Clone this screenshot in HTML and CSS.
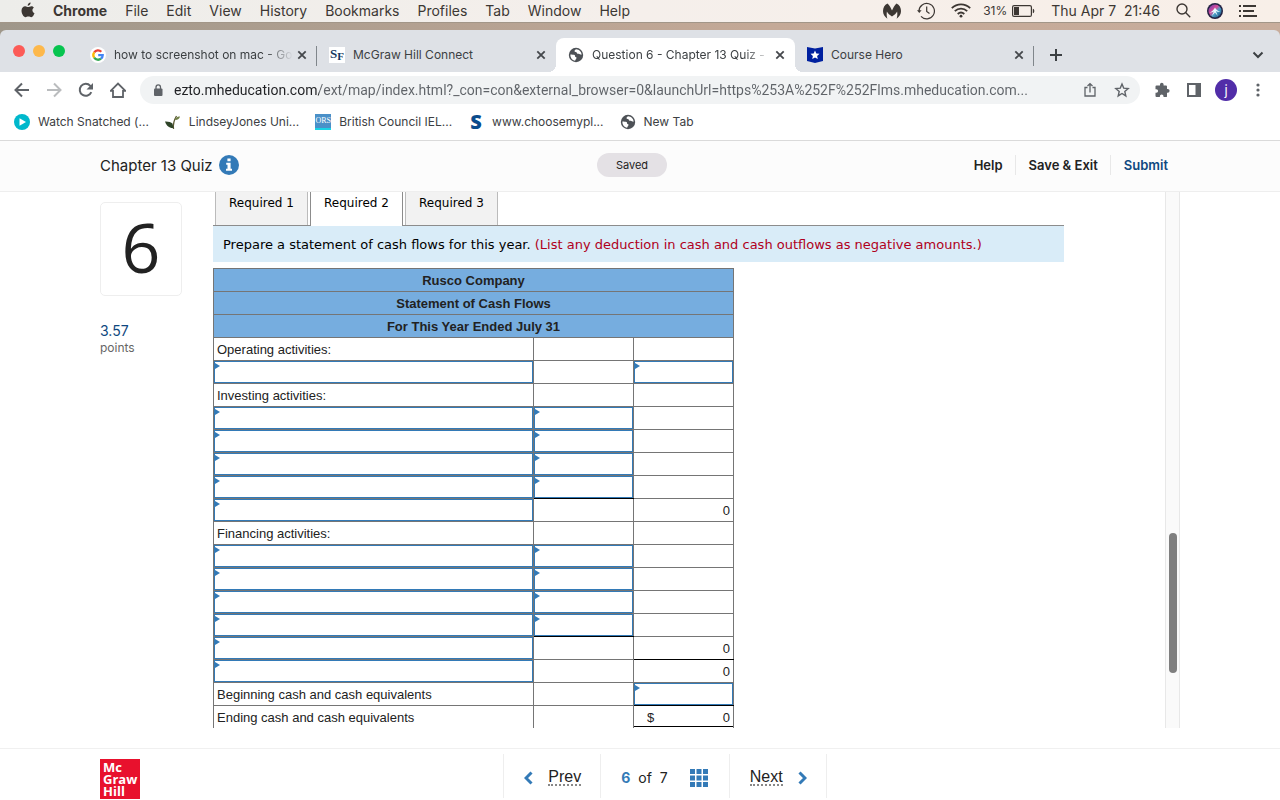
FILE: index.html
```
<!DOCTYPE html>
<html lang="en">
<head>
    <meta charset="UTF-8">
    <meta name="viewport" content="width=device-width, initial-scale=1.0">
    <title>Question 6 - Chapter 13 Quiz - Connect</title>
    <link rel="stylesheet" href="styles.css">
</head>
<body>
    <!-- Shared icon shapes -->
    <svg class="defs" width="0" height="0" aria-hidden="true">
        <symbol id="close" viewBox="0 0 16 16"><path d="M4.300 4.300l7.400 7.400M11.700 4.300l-7.400 7.400" fill="none" stroke="#45484c" stroke-width="1.800"/></symbol>
        <symbol id="globe" viewBox="0 0 16 16">
            <circle cx="8" cy="8" r="7.200" fill="#4d5156"/>
            <path d="M2.400 7.400c1.500 .3 3.200-.1 4.200 .7 .8 .7 0 1.500 .9 2 1.200 .4 1.400 1 .5 1.900-.6 .6-.8 1.200-.9 1.800C4.300 13.200 2.200 10.600 2.400 7.400zM8 2.300c-.9 .8-1.800 1.400-1.400 2.300 .5 .8 1.600 0 2 .9 .3 .9 1 1.400 2.100 1.200 1 0 1.300 .9 2.900 1-.1-2.900-2.300-5.300-5.600-5.400z" fill="#fff"/>
        </symbol>
    </svg>

    <!-- macOS menu bar -->
    <header class="menubar">
        <nav class="menus">
            <svg class="apple" width="14" height="17" viewBox="0 0 14 17"><path d="M9.600 .5c.1 1.500-1.200 3.200-2.900 3.200C6.500 2.200 8 .7 9.600 .5zM12.900 5.800c-2.200 1.300-1.900 4.400 .6 5.400-.6 1.700-1.900 4-3.200 4-1.100 0-1.500-.7-2.900-.7-1.400 0-1.900 .7-2.900 .7C2.600 15.200 .5 11.700 .5 8.800c0-2.900 1.800-4.500 3.700-4.500 1.200 0 2.200 .8 3 .8 .7 0 1.900-.9 3.400-.9 .9 0 1.900 .6 2.300 1.600z" fill="#3c3733"/></svg>
            <b>Chrome</b>
            <span>File</span>
            <span>Edit</span>
            <span>View</span>
            <span>History</span>
            <span>Bookmarks</span>
            <span>Profiles</span>
            <span>Tab</span>
            <span>Window</span>
            <span>Help</span>
        </nav>
        <div class="status">
            <svg width="18" height="16" viewBox="0 0 18 16"><path d="M4.500 .5C6.500 2.500 8 5 9 7.500c1-2.500 2.500-5 4.500-7C16.500 2 18 4.800 18 8c0 3.200-1.500 5.600-4.400 7.800 .8-2.400 .9-5 .5-7.300C13 10.500 11.500 12 9 13.500 6.500 12 5 10.500 3.900 8.500c-.4 2.300-.3 4.900 .5 7.300C1.500 13.600 0 11.200 0 8 0 4.800 1.500 2 4.500 .5z" fill="#3c3733"/></svg>
            <svg width="18" height="18" viewBox="0 0 18 18" fill="none" stroke="#3c3733"><path d="M2 9a7.700 7.700 0 1 1 2 5.300" stroke-width="1.200"/><path d="M0 8.200h4.600L2.300 11z" fill="#3c3733" stroke="none"/><path d="M9.700 4.600v4.800l2.800 2" stroke-width="1.200"/></svg>
            <svg width="20" height="15" viewBox="0 0 20 15" fill="none" stroke="#3c3733" stroke-width="1.800"><path d="M.8 5.200c5.200-5.100 13.200-5.100 18.400 0M3.800 8.200c3.600-3.500 8.800-3.500 12.400 0M6.700 11c2-1.900 4.600-1.900 6.600 0"/><circle cx="10" cy="13.200" r="1.400" fill="#3c3733" stroke="none"/></svg>
            <span class="battery">31%
                <svg width="23" height="12" viewBox="0 0 23 12"><rect x=".6" y=".6" width="18.800" height="10.800" rx="1.500" fill="none" stroke="#3c3733" stroke-width="1.200"/><path d="M2 2h5v8H2zM20.800 3.800c2 .4 2 4 0 4.400z" fill="#3c3733"/></svg>
            </span>
            <time>Thu Apr 7&nbsp; 21:46</time>
            <svg width="15" height="15" viewBox="0 0 15 15" fill="none" stroke="#3c3733" stroke-width="1.400"><circle cx="6" cy="6" r="5"/><path d="M9.600 9.600l4.600 4.600"/></svg>
            <svg width="16" height="16" viewBox="0 0 16 16"><defs><linearGradient id="siri" x1="0" y1="0" x2="1" y2="1"><stop offset="0" stop-color="#5b3fb0"/><stop offset=".4" stop-color="#d84a9a"/><stop offset=".6" stop-color="#4aa0c8"/><stop offset="1" stop-color="#123c6e"/></linearGradient></defs><circle cx="8" cy="8" r="8" fill="#232142"/><circle cx="8" cy="8" r="6.500" fill="url(#siri)"/><path d="M2.500 9.500C5 9 7 6.500 8 4.500c1 2 3 4 5.500 4.500-2 .2-3.500-.2-4.700-1l2 5L8 9.500 4.800 13l2-4.500c-1.300 .8-2.800 1.200-4.300 1z" fill="#e8fbff"/></svg>
            <svg width="19" height="12" viewBox="0 0 19 12" fill="#3c3733"><path d="M0 0h2v2H0zM4 0h13v2H4zM0 5h2v2H0zM4 5h11v2H4zM0 10h2v2H0zM4 10h14v2H4z"/></svg>
        </div>
    </header>

    <div class="browser">
        <!-- Tab strip -->
        <div class="tabstrip">
            <div class="lights"><i class="red"></i><i class="yellow"></i><i class="green"></i></div>
            <div class="tab divided">
                <svg class="favicon" viewBox="0 0 16 16"><circle cx="8" cy="8" r="8" fill="#fff"/><g fill="none" stroke-width="2.300"><path d="M4.200 5.300A4.700 4.700 0 0 1 11.300 4.700" stroke="#ea4335"/><path d="M4.200 5.300a4.700 4.700 0 0 0 0 5.400" stroke="#fbbc05"/><path d="M4.200 10.700a4.700 4.700 0 0 0 6.800 1" stroke="#34a853"/><path d="M11 11.700A4.700 4.700 0 0 0 12.700 8.200H8.200" stroke="#4285f4"/></g></svg>
                <span class="tab-title fade">how to screenshot on mac - Go</span>
                <button class="close" aria-label="Close tab"><svg width="16" height="16"><use href="#close"/></svg></button>
            </div>
            <div class="tab">
                <span class="favicon sf"><span>S</span><small>F</small></span>
                <span class="tab-title">McGraw Hill Connect</span>
                <button class="close" aria-label="Close tab"><svg width="16" height="16"><use href="#close"/></svg></button>
            </div>
            <div class="tab active">
                <svg class="favicon"><use href="#globe"/></svg>
                <span class="tab-title fade">Question 6 - Chapter 13 Quiz -</span>
                <button class="close" aria-label="Close tab"><svg width="16" height="16"><use href="#close"/></svg></button>
            </div>
            <div class="tab divided">
                <svg class="favicon" viewBox="0 0 16 16"><path d="M0 0l8 1.500L16 0v14l-8 2-8-2z" fill="#00209f"/><path d="M8 3.500l1.300 3 3.200 .3-2.400 2.100 .7 3.200L8 10.400l-2.800 1.700 .7-3.200-2.400-2.100 3.200-.3z" fill="#fff"/></svg>
                <span class="tab-title">Course Hero</span>
                <button class="close" aria-label="Close tab"><svg width="16" height="16"><use href="#close"/></svg></button>
            </div>
            <button class="new-tab" aria-label="New tab"><svg width="12" height="12" viewBox="0 0 12 12"><path d="M6 0v12M0 6h12" stroke="#3c4043" stroke-width="2"/></svg></button>
            <button class="tab-search" aria-label="Search tabs"><svg width="12" height="8" viewBox="0 0 12 8"><path d="M1.500 1.500L6 6l4.500-4.500" fill="none" stroke="#3c4043" stroke-width="2"/></svg></button>
        </div>

        <!-- Address bar -->
        <div class="toolbar">
            <button aria-label="Back"><svg width="16" height="16" viewBox="0 0 16 16" fill="none" stroke="#5f6368" stroke-width="2"><path d="M15 8H2M8 1.500L1.500 8 8 14.500"/></svg></button>
            <button aria-label="Forward"><svg width="16" height="16" viewBox="0 0 16 16" fill="none" stroke="#babcbe" stroke-width="2"><path d="M1 8h13M8 1.500L14.500 8 8 14.500"/></svg></button>
            <button aria-label="Reload"><svg width="16" height="16" viewBox="0 0 16 16"><path d="M13.300 10.200A6 6 0 1 1 12.300 3.900L14 5.500" fill="none" stroke="#5f6368" stroke-width="2"/><path d="M15 1v6.500H8.500z" fill="#5f6368"/></svg></button>
            <button aria-label="Home"><svg width="16" height="16" viewBox="0 0 16 16" fill="none" stroke="#5f6368" stroke-width="1.800"><path d="M.7 8.800L8 1.500l7.300 7.300H13V15H3V8.800z"/></svg></button>
            <div class="omnibox">
                <svg width="10" height="13" viewBox="0 0 10 13"><rect x="1" y="4.500" width="8.500" height="7.500" rx="1" fill="#5f6368"/><path d="M3 5V3.200a2.200 2.200 0 0 1 4.500 0V5" fill="none" stroke="#5f6368" stroke-width="1.300"/></svg>
                <input class="url" type="text" aria-label="Address" value="ezto.mheducation.com/ext/map/index.html?_con=con&amp;external_browser=0&amp;launchUrl=https%253A%252F%252Flms.mheducation.com...">
                <button aria-label="Share"><svg width="16" height="16" viewBox="0 0 16 16" fill="none" stroke="#5f6368" stroke-width="1.300"><path d="M5.500 5.500H3V14h10V5.500h-2.500M8 10.500V2M5.500 4L8 1.600 10.500 4"/></svg></button>
                <button aria-label="Bookmark"><svg width="16" height="16" viewBox="0 0 16 16" fill="none" stroke="#5f6368" stroke-width="1.400"><path d="M8 2l1.700 4.100 4.500 .4-3.400 3 1 4.400L8 11.500l-3.800 2.400 1-4.400-3.400-3 4.500-.4z"/></svg></button>
            </div>
            <button aria-label="Extensions"><svg width="16" height="16" viewBox="0 0 16 16" fill="#5f6368"><path d="M6 2.600a1.800 1.800 0 0 1 3.600 0v.8H12a1 1 0 0 1 1 1v2.500h.7a1.900 1.900 0 0 1 0 3.800H13v3.500a.9 .9 0 0 1-.9 .9H9.500v-.8a1.800 1.800 0 0 0-3.600 0v.8H2.500a1 1 0 0 1-1-1v-3.300h.8a1.800 1.800 0 0 0 0-3.600h-.8V4.400a1 1 0 0 1 1-1H6z"/></svg></button>
            <button aria-label="Side panel"><svg width="16" height="16" viewBox="0 0 16 16"><path d="M1 1h14v14H1zM3 3v10h6.500V3z" fill="#5f6368" fill-rule="evenodd"/></svg></button>
            <button class="avatar" aria-label="Profile">j</button>
            <button aria-label="More"><svg width="16" height="16" viewBox="0 0 16 16" fill="#5f6368"><circle cx="8" cy="3" r="1.600"/><circle cx="8" cy="8" r="1.600"/><circle cx="8" cy="13" r="1.600"/></svg></button>
        </div>

        <!-- Bookmarks bar -->
        <nav class="bookmarks">
            <a href="#"><svg class="favicon" viewBox="0 0 16 16"><circle cx="8" cy="8" r="8" fill="#00b8cc"/><path d="M5.500 4.200l6.500 3.800-6.500 3.800z" fill="#fff"/></svg>Watch Snatched (...</a>
            <a href="#"><svg class="favicon" viewBox="0 0 16 16"><path d="M8.500 15c-.6-5 .5-9 3-13" fill="none" stroke="#5b5a35" stroke-width="1.300"/><path d="M0 7.500c3-.2 6 .5 7.500 2l1 4.500C4.500 14.500 1.500 12 0 7.500z" fill="#2f4428"/><path d="M10 6c.5-2.500 3-4 5-3.500C14.500 5 12 6.500 10 6z" fill="#6f7f45"/></svg>LindseyJones Uni...</a>
            <a href="#"><span class="favicon ors">ORS</span>British Council IEL...</a>
            <a href="#"><span class="favicon choose">S</span>www.choosemypl...</a>
            <a href="#"><svg class="favicon"><use href="#globe"/></svg>New Tab</a>
        </nav>
    </div>

    <!-- Quiz header -->
    <div class="quiz-header">
        <div class="wrap header-grid">
            <div class="quiz-name">Chapter 13 Quiz
                <svg width="20" height="20" viewBox="0 0 20 20"><circle cx="10" cy="10" r="10" fill="#337ab7"/><path d="M8.400 3.500h3.200v2.700H8.400zM7.200 7.700h4.400v6h1.400v2H7v-2h1.500v-4H7.200z" fill="#fff"/></svg>
            </div>
            <span class="saved">Saved</span>
            <nav class="quiz-nav">
                <a href="#">Help</a>
                <a href="#">Save &amp; Exit</a>
                <a href="#" class="submit">Submit</a>
            </nav>
        </div>
    </div>

    <!-- Question area -->
    <main class="wrap content">
        <aside class="info">
            <div class="question-number">6</div>
            <div class="points">3.57</div>
            <div class="points-label">points</div>
        </aside>

        <section class="question">
            <div class="req-tabs">
                <button>Required 1</button>
                <button class="active">Required 2</button>
                <button>Required 3</button>
            </div>
            <p class="instruction">Prepare a statement of cash flows for this year. <span>(List any deduction in cash and cash outflows as negative amounts.)</span></p>

            <table class="cash-flows">
                <colgroup><col class="col-name"><col class="col-amount"><col class="col-amount"></colgroup>
                <thead>
                    <tr><th colspan="3">Rusco Company</th></tr>
                    <tr><th colspan="3">Statement of Cash Flows</th></tr>
                    <tr><th colspan="3">For This Year Ended July 31</th></tr>
                </thead>
                <tbody>
                    <tr><td>Operating activities:</td><td></td><td></td></tr>
                    <tr><td class="entry"><input type="text" aria-label="Operating item"></td><td></td><td class="entry"><input type="text" aria-label="Operating total"></td></tr>
                    <tr><td>Investing activities:</td><td></td><td></td></tr>
                    <tr><td class="entry"><input type="text" aria-label="Investing item 1"></td><td class="entry"><input type="text" aria-label="Investing amount 1"></td><td></td></tr>
                    <tr><td class="entry"><input type="text" aria-label="Investing item 2"></td><td class="entry"><input type="text" aria-label="Investing amount 2"></td><td></td></tr>
                    <tr><td class="entry"><input type="text" aria-label="Investing item 3"></td><td class="entry"><input type="text" aria-label="Investing amount 3"></td><td></td></tr>
                    <tr><td class="entry"><input type="text" aria-label="Investing item 4"></td><td class="entry sum"><input type="text" aria-label="Investing amount 4"></td><td></td></tr>
                    <tr><td class="entry"><input type="text" aria-label="Investing total"></td><td></td><td class="amount">0</td></tr>
                    <tr><td>Financing activities:</td><td></td><td></td></tr>
                    <tr><td class="entry"><input type="text" aria-label="Financing item 1"></td><td class="entry"><input type="text" aria-label="Financing amount 1"></td><td></td></tr>
                    <tr><td class="entry"><input type="text" aria-label="Financing item 2"></td><td class="entry"><input type="text" aria-label="Financing amount 2"></td><td></td></tr>
                    <tr><td class="entry"><input type="text" aria-label="Financing item 3"></td><td class="entry"><input type="text" aria-label="Financing amount 3"></td><td></td></tr>
                    <tr><td class="entry"><input type="text" aria-label="Financing item 4"></td><td class="entry sum"><input type="text" aria-label="Financing amount 4"></td><td></td></tr>
                    <tr><td class="entry"><input type="text" aria-label="Financing total"></td><td></td><td class="amount sum">0</td></tr>
                    <tr><td class="entry"><input type="text" aria-label="Net change in cash"></td><td></td><td class="amount">0</td></tr>
                    <tr><td>Beginning cash and cash equivalents</td><td></td><td class="entry sum"><input type="text" aria-label="Beginning cash"></td></tr>
                    <tr class="last"><td>Ending cash and cash equivalents</td><td></td><td><div class="total"><span>$</span><span>0</span></div></td></tr>
                </tbody>
            </table>
        </section>

        <div class="scrollbar"><div class="thumb"></div></div>
    </main>

    <!-- Footer with question pager -->
    <footer class="quiz-footer">
        <div class="wrap footer-row">
            <div class="logo">Mc<br>Graw<br>Hill</div>
            <nav class="pager">
                <a href="#" class="cell prev">
                    <svg width="9" height="14" viewBox="0 0 9 14"><path d="M7.500 1.500L2 7l5.500 5.500" fill="none" stroke="#337ab7" stroke-width="3"/></svg>
                    <span>Prev</span>
                </a>
                <div class="cell count">
                    <b>6</b><span>of</span><span>7</span>
                    <svg width="18" height="18" viewBox="0 0 18 18" fill="#337ab7"><path d="M0 0h5v5H0zM6.500 0h5v5h-5zM13 0h5v5h-5zM0 6.500h5v5H0zM6.500 6.500h5v5h-5zM13 6.500h5v5h-5zM0 13h5v5H0zM6.500 13h5v5h-5zM13 13h5v5h-5z"/></svg>
                </div>
                <a href="#" class="cell next">
                    <span>Next</span>
                    <svg width="9" height="14" viewBox="0 0 9 14"><path d="M1.500 1.500L7 7l-5.500 5.500" fill="none" stroke="#337ab7" stroke-width="3"/></svg>
                </a>
            </nav>
        </div>
    </footer>
</body>
</html>
```
FILE: styles.css
```
* {
    box-sizing: border-box;
}

body {
    margin: 0;
    height: 100vh;
    display: flex;
    flex-direction: column;
    overflow: hidden;
    background: #fff;
    color: #222;
    font-family: Inter, Roboto, sans-serif;
}

a {
    color: inherit;
    text-decoration: none;
}

button {
    display: flex;
    align-items: center;
    justify-content: center;
    flex: none;
    padding: 0;
    border: 0;
    background: none;
    font-family: inherit;
}

svg {
    flex: none;
}

.defs {
    position: absolute;
}

/* macOS menu bar */
.menubar {
    flex: none;
    display: flex;
    justify-content: space-between;
    align-items: center;
    height: 23px;
    padding: 0 22px 1px 21px;
    background: linear-gradient(90deg, #ededea, #f5efeb 50%, #f8efe8);
    border-bottom: 1px solid #a29688;
    color: #3c3733;
    font-size: 14px;
    white-space: nowrap;
}

.menus,
.status {
    display: flex;
    align-items: center;
    gap: 18px;
}

.menus b {
    font-weight: 700;
}

.status {
    gap: 16px;
}

.battery {
    display: flex;
    align-items: center;
    gap: 5px;
    margin-left: -4px;
    font-size: 12px;
}

/* Browser window */
.browser {
    flex: none;
    padding-top: 7px;
    background: linear-gradient(90deg, #9f978a, #c4a997 60%, #c8ad9c);
    border-bottom: 1px solid #dadada;
}

.tabstrip {
    display: flex;
    align-items: center;
    height: 42px;
    padding-top: 8px;
    background: #dee1e6;
    border-radius: 6px 6px 0 0;
}

.lights {
    flex: none;
    display: flex;
    gap: 8px;
    width: 78px;
    padding: 0 0 8px 13px;
}

.lights i {
    width: 12px;
    height: 12px;
    border-radius: 50%;
}

.lights .red {
    background: #fc5b57;
}

.lights .yellow {
    background: #fdb84b;
}

.lights .green {
    background: #06c44f;
}

.tab {
    flex: 0 1 239px;
    min-width: 0;
    display: flex;
    align-items: center;
    gap: 8px;
    height: 34px;
    padding: 0 7px 0 12px;
    position: relative;
}

.tab.divided::before {
    content: "";
    position: absolute;
    right: 0;
    top: 8px;
    width: 1px;
    height: 20px;
    background: #80868b;
}

.tab.active {
    background: #fff;
    border-radius: 8px 8px 0 0;
}

.tab.active::before,
.tab.active::after {
    content: "";
    position: absolute;
    bottom: 0;
    width: 8px;
    height: 8px;
}

.tab.active::before {
    left: -8px;
    background: radial-gradient(circle at 0 0, transparent 8px, #fff 8px);
}

.tab.active::after {
    right: -8px;
    background: radial-gradient(circle at 100% 0, transparent 8px, #fff 8px);
}

.favicon {
    flex: none;
    width: 16px;
    height: 16px;
}

.sf {
    display: flex;
    justify-content: center;
    background: #fff;
    color: #14375e;
    font: bold 13px/13px "Liberation Serif", serif;
}

.sf small {
    padding-top: 3px;
    font-size: 11px;
}

.tab-title {
    flex: 1;
    overflow: hidden;
    padding-bottom: 2px;
    white-space: nowrap;
    font-size: 12px;
    color: #3c4043;
}

.tab-title.fade {
    margin-right: -7px;
    mask-image: linear-gradient(90deg, #000 85%, transparent);
}

.new-tab {
    width: 44px;
}

.tab-search {
    margin-left: auto;
    margin-right: 16px;
}

/* Address bar */
.toolbar {
    display: flex;
    align-items: center;
    gap: 16px;
    height: 36px;
    padding: 0 14px;
    background: #fff;
}

.omnibox {
    flex: 1;
    display: flex;
    align-items: center;
    gap: 16px;
    height: 28px;
    margin-left: -2px;
    margin-right: -2px;
    padding: 0 10px 0 13px;
    border-radius: 14px;
    background: #f1f3f4;
}

/* Host name dark, path grey */
.url {
    flex: 1;
    min-width: 0;
    margin-left: -5px;
    padding: 0;
    border: 0;
    outline: 0;
    font-family: Roboto, sans-serif;
    font-size: 14px;
    background: linear-gradient(90deg, #202124 145px, #5f6368 145px);
    background-clip: text;
    -webkit-background-clip: text;
    color: transparent;
}

.avatar {
    width: 22px;
    height: 22px;
    margin: 0 -3px;
    border-radius: 50%;
    background: #512da8;
    color: #fff;
    font-size: 13px;
}

/* Bookmarks bar */
.bookmarks {
    display: flex;
    align-items: center;
    gap: 16px;
    height: 32px;
    padding: 0 14px 5px;
    background: #fff;
    color: #3c4043;
    font-size: 12px;
    white-space: nowrap;
}

.bookmarks a {
    display: flex;
    align-items: center;
    gap: 8px;
}

.ors {
    overflow: hidden;
    background: #4a90c8;
    border-bottom: 2px solid #19d3e6;
    color: #fff;
    font: 8px/14px "Liberation Serif", serif;
    text-align: center;
}

.choose {
    color: #0a4b8c;
    font: 900 20px/16px "Open Sans", sans-serif;
    text-align: center;
}

/* Quiz header */
.wrap {
    width: calc(100% - 200px);
    margin: 0 auto;
}

.quiz-header {
    flex: none;
    background: #fcfcfc;
    border-bottom: 1px solid #eee;
}

.header-grid {
    display: grid;
    grid-template-columns: 1fr auto 1fr;
    align-items: center;
    height: 50px;
    padding: 0 16px 2px 0;
}

.quiz-name {
    display: flex;
    align-items: center;
    gap: 6px;
    font-size: 15px;
}

.saved {
    width: 70px;
    border-radius: 12px;
    background: #e4e1e5;
    font-size: 11px;
    line-height: 24px;
    text-align: center;
}

.quiz-nav {
    justify-self: end;
    display: flex;
    margin-right: -4px;
    font-size: 13px;
    font-weight: 600;
    line-height: 20px;
}

.quiz-nav a {
    padding: 0 12px 0 13px;
    border-right: 1px solid #e8e8e8;
}

.quiz-nav .submit {
    padding-right: 0;
    border: 0;
    color: #0f4880;
}

/* Question area */
.content {
    flex: 1;
    min-height: 0;
    display: flex;
    margin-bottom: 20px;
    overflow: hidden;
}

.info {
    flex: none;
    width: 82px;
    margin-right: 31px;
    padding-top: 10px;
}

.question-number {
    height: 94px;
    border: 1px solid #eee;
    border-radius: 5px;
    font-family: "Open Sans", sans-serif;
    font-size: 68px;
    font-weight: 500;
    line-height: 87px;
    text-align: center;
}

.points {
    margin-top: 26px;
    color: #0f4880;
    font-size: 14px;
    line-height: 18px;
}

.points-label {
    color: #666;
    font-size: 12px;
    line-height: 16px;
}

.question {
    flex: 1;
    min-width: 0;
    margin-right: 101px;
}

.req-tabs {
    display: flex;
    gap: 2px;
    height: 34px;
    padding-left: 2px;
    border-bottom: 1px solid #8c8c8c;
}

.req-tabs button {
    width: 93px;
    height: 33px;
    padding-bottom: 12px;
    border: solid #bbb;
    border-width: 0 1px;
    background: #f2f2f2;
    color: #000;
    font-family: "DejaVu Sans", sans-serif;
    font-size: 12px;
}

.req-tabs .active {
    height: 34px;
    padding-bottom: 13px;
    border-color: #8c8c8c;
    background: #fff;
}

.instruction {
    margin: 0 0 6px;
    padding: 2px 10px 0;
    background: #d9ecf8;
    color: #000;
    font-family: "DejaVu Sans", sans-serif;
    font-size: 13px;
    line-height: 34px;
    white-space: nowrap;
}

.instruction span {
    color: #b00020;
}

/* Cash flow statement */
.cash-flows {
    width: 521px;
    table-layout: fixed;
    border-collapse: collapse;
    font-family: "Liberation Sans", Arial, sans-serif;
    font-size: 13px;
    line-height: 20px;
}

.col-name {
    width: 320px;
}

.col-amount {
    width: 100px;
}

.cash-flows th,
.cash-flows td {
    height: 23px;
    border: 1px solid #757575;
}

.cash-flows th {
    padding: 2px 0 0;
    background: #76addf;
}

.cash-flows td {
    padding: 2px 3px 0;
}

.cash-flows .entry {
    position: relative;
    padding: 0;
}

.entry input {
    display: block;
    width: 100%;
    height: 22px;
    padding: 0 6px;
    border: 1px solid #337ab7;
    background: #fff;
    font: inherit;
}

/* Small flag in the corner of each entry cell */
.entry::before {
    content: "";
    position: absolute;
    left: 1px;
    top: 2px;
    border: solid transparent;
    border-width: 3px 0 3px 5px;
    border-left-color: #337ab7;
}

.cash-flows .sum {
    border-bottom-color: #000;
}

.cash-flows .amount {
    text-align: right;
}

.cash-flows .last td {
    height: 30px;
    padding-bottom: 8px;
    vertical-align: top;
}

.total {
    display: flex;
    justify-content: space-between;
    height: 19px;
    margin: 0 -3px;
    padding: 0 3px 0 13px;
    border-bottom: 1px solid #000;
}

/* Page scrollbar */
.scrollbar {
    flex: none;
    width: 15px;
    padding: 341px 2px 0 3px;
    border: solid #e8e8e8;
    border-width: 0 1px;
    background: #fafafa;
}

.thumb {
    width: 8px;
    height: 140px;
    border-radius: 4px;
    background: #7f7f7f;
}

/* Footer */
.quiz-footer {
    flex: none;
    border-top: 1px solid #f0f0f0;
}

.footer-row {
    display: flex;
    align-items: center;
    height: 51px;
    padding-top: 8px;
}

.logo {
    flex: none;
    width: 40px;
    height: 40px;
    margin-right: 10px;
    padding: 2px 3px;
    background: #e8112d;
    color: #fff;
    font: bold 13px/12px "Open Sans", sans-serif;
}

.pager {
    flex: 1;
    display: flex;
    justify-content: center;
    margin-top: -6px;
}

.cell {
    display: flex;
    align-items: center;
    height: 44px;
    padding: 4px 19px 0 20px;
    border-left: 1px solid #eee;
    font-size: 16px;
}

.prev,
.next {
    gap: 15px;
    font-family: "Liberation Sans", Arial, sans-serif;
}

.prev span,
.next span {
    border-bottom: 2px dotted #888;
    line-height: 15px;
}

.next {
    border-right: 1px solid #eee;
}

.count {
    gap: 8px;
    padding-right: 21px;
    font-size: 14px;
}

.count b {
    color: #337ab7;
}

.count svg {
    margin-left: 14px;
}
```
